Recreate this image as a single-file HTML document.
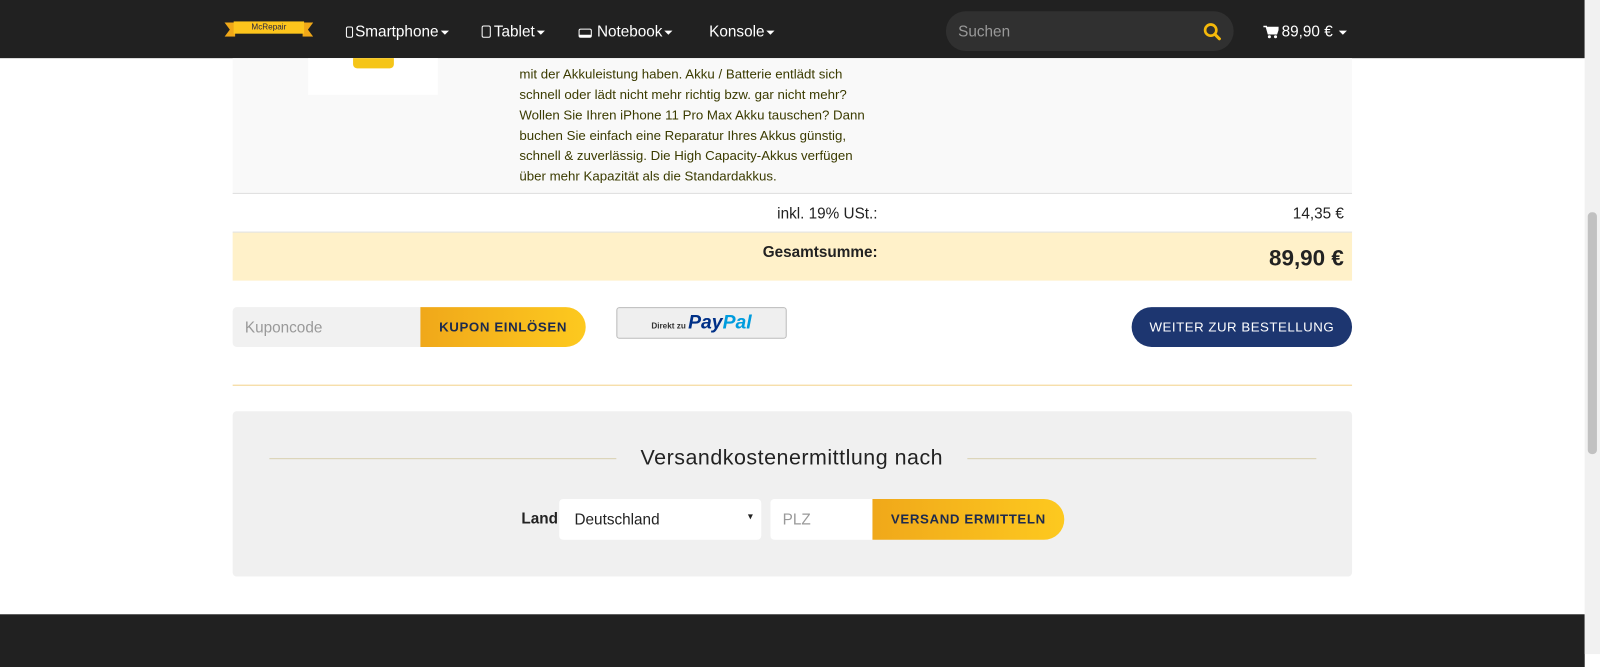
<!DOCTYPE html>
<html><head><meta charset="utf-8"><style>
*{box-sizing:border-box;margin:0;padding:0}
html,body{width:1600px;height:654px;overflow:hidden;background:#fff}
body{font-family:"Liberation Sans",sans-serif}
#w{position:absolute;left:0;top:0;width:1568px;height:641px;transform:scale(1.02041);transform-origin:0 0}
.a{position:absolute}
.nav{left:0;top:0;width:1553px;height:57px;background:#212121;color:#fff;font-size:15px}
.nav span{position:absolute;top:23px;white-space:nowrap}
.sb{left:1553px;top:0;width:15px;height:641px;background:#f1f1f1}
.th{left:1556px;top:208px;width:9px;height:237px;background:#c1c1c1;border-radius:4px}
.txt{left:509px;top:63px;width:360px;font-size:13px;line-height:20px;color:#3b3b00}
.caret{display:inline-block;border-left:4px solid transparent;border-right:4px solid transparent;border-top:4px solid #fff;vertical-align:middle;margin-left:2px}
.ic{display:inline-block;vertical-align:-1px;border:1.5px solid #fff;border-radius:2px}
</style></head><body><div id="w">
<div class="a nav">
 <div class="a" style="left:220px;top:22px;width:87px;height:14px;background:#f0a818;clip-path:polygon(0 0,12% 0,12% 100%,0 100%,6% 50%)"></div>
 <div class="a" style="left:220px;top:22px;width:87px;height:14px;background:#f0a818;clip-path:polygon(88% 0,100% 0,94% 50%,100% 100%,88% 100%)"></div>
 <div class="a" style="left:229px;top:21px;width:69px;height:12px;background:#fdc51c;color:#224;font-size:8px;text-align:center;line-height:12px">McRepair</div>
 <span style="left:339px"><i class="ic" style="width:7px;height:11px;margin-right:2px"></i>Smartphone<i class="caret"></i></span>
 <span style="left:472px"><i class="ic" style="width:9px;height:12px;margin-right:3px"></i>Tablet<i class="caret"></i></span>
 <span style="left:567px"><i class="ic" style="width:13px;height:9px;border-bottom-width:3px;margin-right:5px"></i>Notebook<i class="caret"></i></span>
 <span style="left:695px">Konsole<i class="caret"></i></span>
 <div class="a" style="left:927px;top:11px;width:282px;height:39px;background:#303030;border-radius:20px"></div>
 <span style="left:939px;top:23px;color:#999">Suchen</span>
 <svg class="a" style="left:1179px;top:22px" width="18" height="18" viewBox="0 0 18 18"><circle cx="7.5" cy="7.5" r="5.5" fill="none" stroke="#f5b90a" stroke-width="2.6"/><path d="M11.5 11.5L16 16" stroke="#f5b90a" stroke-width="3" stroke-linecap="round"/></svg>
 <svg class="a" style="left:1238px;top:25px" width="15" height="13" viewBox="0 0 15 13"><path d="M0 1h3l2 7h8l2-6H4" fill="#fff" stroke="#fff" stroke-width="1.5"/><circle cx="6" cy="11" r="1.5" fill="#fff"/><circle cx="12" cy="11" r="1.5" fill="#fff"/></svg>
 <span style="left:1256px">89,90 € <i class="caret"></i></span>
</div>
<div class="a" style="left:228px;top:57px;width:1097px;height:132px;background:#f9f9f9"></div>
<div class="a" style="left:302px;top:57px;width:127px;height:36px;background:#fff"></div>
<div class="a" style="left:346px;top:57px;width:40px;height:10px;background:#f5c518;border-radius:0 0 4px 4px"></div>
<div class="a txt">mit der Akkuleistung haben. Akku / Batterie entlädt sich<br>schnell oder lädt nicht mehr richtig bzw. gar nicht mehr?<br>Wollen Sie Ihren iPhone 11 Pro Max Akku tauschen? Dann<br>buchen Sie einfach eine Reparatur Ihres Akkus günstig,<br>schnell &amp; zuverlässig. Die High Capacity-Akkus verfügen<br>über mehr Kapazität als die Standardakkus.</div>
<div class="a" style="left:228px;top:189px;width:1097px;height:1px;background:#ddd"></div>
<div class="a" style="left:600px;top:201px;width:260px;text-align:right;font-size:15px;color:#222">inkl. 19% USt.:</div>
<div class="a" style="left:1100px;top:201px;width:217px;text-align:right;font-size:15px;color:#222">14,35 €</div>
<div class="a" style="left:228px;top:227px;width:1097px;height:1px;background:#ddd"></div>
<div class="a" style="left:228px;top:228px;width:1097px;height:47px;background:#fff1c9"></div>
<div class="a" style="left:600px;top:239px;width:260px;text-align:right;font-size:15px;font-weight:bold;color:#222">Gesamtsumme:</div>
<div class="a" style="left:1100px;top:240px;width:217px;text-align:right;font-size:22px;font-weight:bold;color:#222">89,90 €</div>
<div class="a" style="left:228px;top:301px;width:186px;height:39px;background:#f1f1f1;border-radius:4px 0 0 4px;font-size:15px;color:#999;padding:12px 12px">Kuponcode</div>
<div class="a" style="left:412px;top:301px;width:162px;height:39px;background:linear-gradient(90deg,#f0a81a,#fdc91f);border-radius:0 20px 20px 0;font-size:13px;font-weight:bold;color:#1d2a4d;letter-spacing:.6px;text-align:center;line-height:39px">KUPON EINLÖSEN</div>
<div class="a" style="left:604px;top:301px;width:167px;height:31px;background:#efefef;border:1px solid #bbb;border-radius:3px;text-align:center;line-height:29px"><span style="font-size:8px;font-weight:bold;color:#333">Direkt zu </span><b style="font-size:19px;font-style:italic;color:#003087">Pay</b><b style="font-size:19px;font-style:italic;color:#009cde">Pal</b></div>
<div class="a" style="left:1109px;top:301px;width:216px;height:39px;background:#1d3670;border-radius:20px;color:#fff;font-size:13px;letter-spacing:.5px;text-align:center;line-height:39px">WEITER ZUR BESTELLUNG</div>
<div class="a" style="left:228px;top:377px;width:1097px;height:1px;background:#f3d28a"></div>
<div class="a" style="left:228px;top:403px;width:1097px;height:162px;background:#f0f0f0;border-radius:4px"></div>
<div class="a" style="left:264px;top:449px;width:340px;height:1px;background:#d8d0b0"></div>
<div class="a" style="left:948px;top:449px;width:342px;height:1px;background:#d8d0b0"></div>
<div class="a" style="left:604px;top:437px;width:344px;text-align:center;font-size:21px;color:#222;letter-spacing:.5px">Versandkostenermittlung nach</div>
<div class="a" style="left:511px;top:500px;font-size:15px;font-weight:bold;color:#222">Land</div>
<div class="a" style="left:548px;top:489px;width:198px;height:40px;background:#fff;border-radius:4px;font-size:15px;color:#222;padding:12px 15px">Deutschland<span style="position:absolute;right:8px;top:12px;font-size:10px">▾</span></div>
<div class="a" style="left:755px;top:489px;width:102px;height:40px;background:#fff;border-radius:4px 0 0 4px;font-size:15px;color:#999;padding:12px 12px">PLZ</div>
<div class="a" style="left:855px;top:489px;width:188px;height:40px;background:linear-gradient(90deg,#f0a81a,#fdc91f);border-radius:0 20px 20px 0;font-size:13px;font-weight:bold;color:#1d2a4d;letter-spacing:.6px;text-align:center;line-height:40px">VERSAND ERMITTELN</div>
<div class="a" style="left:0;top:602px;width:1553px;height:52px;background:#212121"></div>
<div class="a sb"></div><div class="a th"></div>
</div></body></html>
